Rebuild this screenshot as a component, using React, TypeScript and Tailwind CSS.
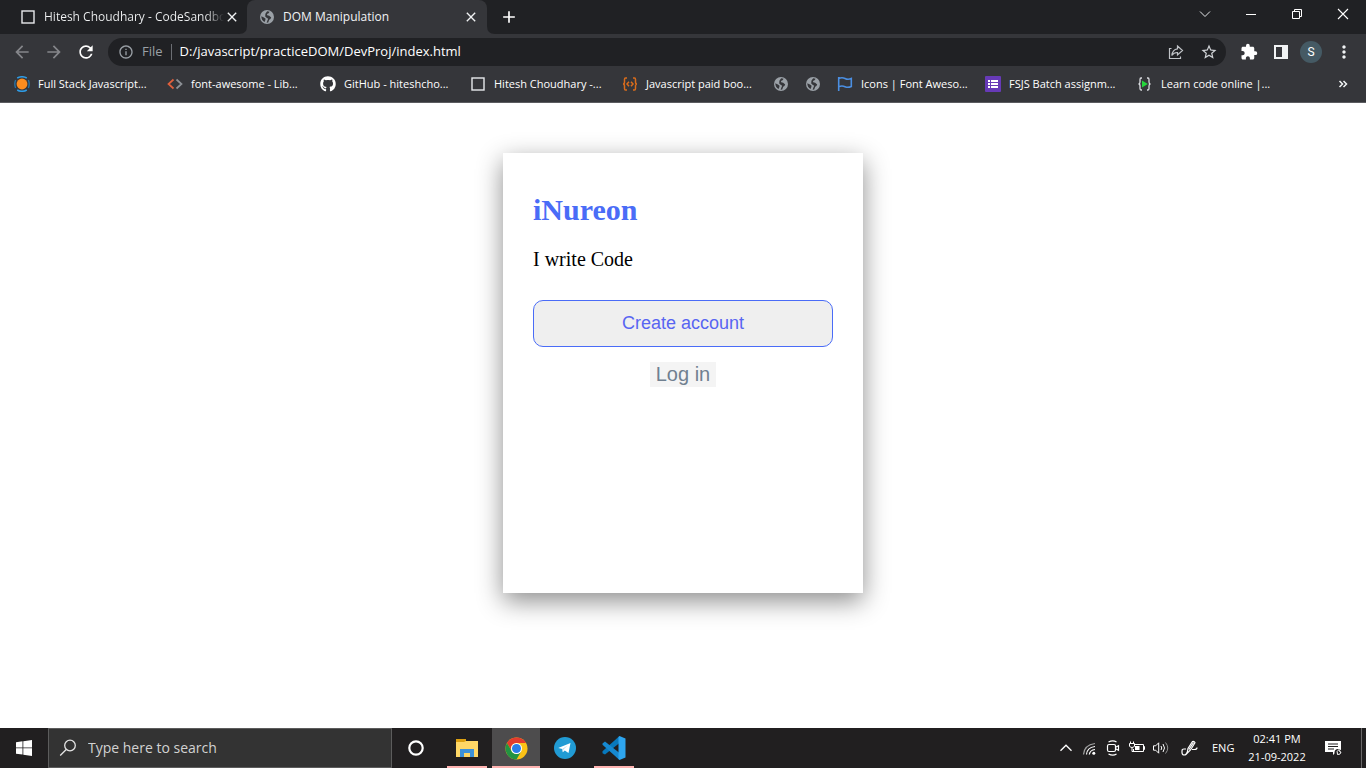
import React from "react";
import { MdArrowBack, MdArrowForward, MdRefresh, MdInfoOutline, MdStarOutline, MdExtension, MdAdd, MdClose, MdMoreVert } from "react-icons/md";
import { FaGithub } from "react-icons/fa";

const GlobeIcon = () => (
  <svg viewBox="0 0 16 16" className="size-4 shrink-0" aria-hidden="true">
    <circle cx="8" cy="8" r="7" fill="#9aa0a6" />
    <path d="M8.200 2.300 10.600 2.800 9.600 4.200 8 5 8.200 6.300 10.200 6.700 12.200 8.400 11.400 10 10.200 10.800 9.200 13.400 7.600 13.700 8.400 11.600 9.200 9.800 7.600 8.800 6.200 7.400 6.400 4.800ZM2.300 7.200 5 8.600 6.600 9.800 6.200 11.600 5.600 12.900Q2.300 11.200 2.300 7.200Z" fill="#35363a" />
  </svg>
);

const SquareIcon = () => (
  <svg viewBox="0 0 16 16" className="size-4 shrink-0" fill="none" aria-hidden="true">
    <rect x="2" y="2" width="12" height="12" stroke="#e8eaed" strokeWidth="1.4" />
  </svg>
);

const OrangeIcon = () => (
  <svg viewBox="0 0 16 16" className="size-4 shrink-0" fill="none" aria-hidden="true">
    <circle cx="8" cy="8" r="5.400" fill="#fb8c1e" />
    <path d="M3.200 2Q8-.6 12.800 2M3.200 14q4.800 2.600 9.600 0" stroke="#2f9be3" strokeWidth="1.500" />
    <path d="M1.600 4Q0 8 1.600 12M14.400 4q1.600 4 0 8" stroke="#2676ad" strokeWidth="1.300" />
  </svg>
);

const AngleIcon = () => (
  <svg viewBox="0 0 16 16" className="size-4 shrink-0" fill="none" strokeWidth="1.700" aria-hidden="true">
    <path d="M6.500 3.500 1.500 8l5 4.500" stroke="#e2603c" />
    <path d="m9.500 3.500 5 4.500-5 4.500" stroke="#8d9196" />
  </svg>
);

const BraceIcon = () => (
  <svg viewBox="0 0 16 16" className="size-4 shrink-0" fill="none" stroke="#d96c1c" strokeWidth="1.500" aria-hidden="true">
    <path d="M5 2H3.500Q2.500 2 2.500 3.500V6Q2.500 8 1 8q1.500 0 1.500 2v2.500q0 1.500 1 1.500H5M11 2h1.500q1 0 1 1.500V6q0 2 1.500 2-1.500 0-1.500 2v2.500q0 1.500-1 1.500H11" />
    <path d="M7 5.800 5 8l2 2.200M9 5.800 11 8l-2 2.200" />
  </svg>
);

const FlagIcon = () => (
  <svg viewBox="0 0 16 16" className="size-4 shrink-0" fill="none" stroke="#4b8fe2" strokeWidth="1.600" aria-hidden="true">
    <path d="M1.700 1v14M1.700 2.500Q5 1 8 2.500t6.300 0v8Q11 12 8 10.700t-6.300 0" />
  </svg>
);

const FormIcon = () => (
  <svg viewBox="0 0 16 16" className="size-4 shrink-0" aria-hidden="true">
    <rect width="16" height="16" rx="1" fill="#673ab7" />
    <path d="M3 4h2v2H3zM6 4h7v2H6zM3 7h2v2H3zM6 7h7v2H6zM3 10h2v2H3zM6 10h7v2H6z" fill="#fff" />
  </svg>
);

const PlayBraceIcon = () => (
  <svg viewBox="0 0 16 16" className="size-4 shrink-0" fill="none" stroke="#dadce0" strokeWidth="1.300" aria-hidden="true">
    <path d="M5 2H4Q3 2 3 3.500V6Q3 8 1.500 8 3 8 3 10v2.500Q3 14 4 14h1M10 2h1q1 0 1 1.500V6q0 2 1.500 2Q12 8 12 10v2.500q0 1.500-1 1.500h-1" />
    <path d="m5 4.500 5.800 3.500L5 11.500z" fill="#25d63b" stroke="none" />
  </svg>
);

const bookmarks = [
  { icon: <OrangeIcon />, label: "Full Stack Javascript...", width: "w-[113px]" },
  { icon: <AngleIcon />, label: "font-awesome - Lib...", width: "w-[113px]" },
  { icon: <FaGithub className="size-4 shrink-0 text-white" />, label: "GitHub - hiteshcho...", width: "w-[110px]" },
  { icon: <SquareIcon />, label: "Hitesh Choudhary -...", width: "w-[112px]" },
  { icon: <BraceIcon />, label: "Javascript paid boo...", width: "w-[111px]" },
  { icon: <GlobeIcon />, label: "", width: "" },
  { icon: <GlobeIcon />, label: "", width: "" },
  { icon: <FlagIcon />, label: "Icons | Font Aweso...", width: "w-[108px]" },
  { icon: <FormIcon />, label: "FSJS Batch assignm...", width: "w-[112px]" },
  { icon: <PlayBraceIcon />, label: "Learn code online |...", width: "w-[112px]" },
];

function TabStrip() {
  return (
    <header className="flex h-[34px] bg-[#202124] text-xs text-[#f1f3f4]">
      <div className="flex w-[247px] items-center pl-5">
        <SquareIcon />
        <span className="ml-2 w-[180px] whitespace-nowrap bg-gradient-to-r from-[#f1f3f4] from-90% to-transparent bg-clip-text text-transparent">
          Hitesh Choudhary - CodeSandbo
        </span>
        <button aria-label="Close Hitesh Choudhary tab"><MdClose className="size-4" /></button>
      </div>
      <div className="relative flex w-60 items-center rounded-t-lg bg-[#35363a] pl-3">
        <svg viewBox="0 0 8 8" className="absolute -left-2 bottom-0 size-2" aria-hidden="true"><path d="M8 0v8H0Q8 8 8 0" fill="#35363a" /></svg>
        <svg viewBox="0 0 8 8" className="absolute -right-2 bottom-0 size-2" aria-hidden="true"><path d="M0 0v8h8Q0 8 0 0" fill="#35363a" /></svg>
        <GlobeIcon />
        <span className="ml-2 flex-1 whitespace-nowrap">DOM Manipulation</span>
        <button aria-label="Close DOM Manipulation tab" className="mr-2"><MdClose className="size-4" /></button>
      </div>
      <button aria-label="New tab" className="ml-3 text-white"><MdAdd className="size-5" /></button>
      <div className="ml-auto flex h-7 items-center text-white">
        <button aria-label="Search tabs" className="flex w-[46px] justify-center">
          <svg viewBox="0 0 12 12" className="size-3" fill="none" stroke="#e4e6e9" aria-hidden="true"><path d="m1 3.500 5 5 5-5" /></svg>
        </button>
        <button aria-label="Minimize" className="flex w-[46px] justify-center">
          <svg viewBox="0 0 12 12" className="size-3" aria-hidden="true"><path d="M1 6h10v1H1z" fill="currentColor" /></svg>
        </button>
        <button aria-label="Restore" className="flex w-[46px] justify-center">
          <svg viewBox="0 0 12 12" className="size-3" fill="none" stroke="currentColor" aria-hidden="true"><path d="M1.500 3.500h7v7h-7zM3.500 3.500v-2h7v7h-2" /></svg>
        </button>
        <button aria-label="Close window" className="flex w-[46px] justify-center">
          <svg viewBox="0 0 12 12" className="size-3" fill="none" stroke="currentColor" strokeWidth="1.100" aria-hidden="true"><path d="m1 1 10 10M11 1 1 11" /></svg>
        </button>
      </div>
    </header>
  );
}

function Toolbar() {
  return (
    <div className="flex h-9 items-center bg-[#35363a] pr-4 pl-3">
      <div className="flex w-24 items-center gap-3">
        <button aria-label="Back" className="text-[#85868a]"><MdArrowBack className="size-5" /></button>
        <button aria-label="Forward" className="text-[#85868a]"><MdArrowForward className="size-5" /></button>
        <button aria-label="Reload" className="text-white"><MdRefresh className="size-5" /></button>
      </div>
      <div className="flex h-7 flex-1 items-center rounded-full bg-[#202124] pr-2 pl-2.5 text-[13px]">
        <MdInfoOutline className="size-4 text-[#9aa0a6]" />
        <span className="ml-2 text-[#9aa0a6]">File</span>
        <span className="mx-2 h-4 w-px bg-[#6b6e73]" />
        <input aria-label="Address" className="min-w-0 flex-1 bg-transparent text-white outline-none" defaultValue="D:/javascript/practiceDOM/DevProj/index.html" />
        <button aria-label="Share this page" className="mr-4">
          <svg viewBox="0 0 16 16" className="size-4" fill="none" stroke="#c0c3c7" strokeWidth="1.200" aria-hidden="true"><path d="M3.500 4.500h-2v10h11v-2M9.500 2l5 4.500-5 4.500V8.500Q6 8.300 3.800 11.500 4.500 5.500 9.500 4.800z" /></svg>
        </button>
        <button aria-label="Bookmark this tab"><MdStarOutline className="size-[18px] text-[#d0d3d7]" /></button>
      </div>
      <div className="ml-3.5 flex items-center gap-4">
        <button aria-label="Extensions"><MdExtension className="size-[18px] text-white" /></button>
        <button aria-label="Side panel">
          <svg viewBox="0 0 14 14" className="size-3.5" aria-hidden="true"><path d="M0 0h14v14H0zM2 2v10h6V2z" fill="#f1f3f4" fillRule="evenodd" /></svg>
        </button>
        <button aria-label="Profile" className="-mx-1 flex size-[22px] items-center justify-center rounded-full bg-[#455a64] font-['Roboto',sans-serif] text-xs text-white">S</button>
        <button aria-label="Menu" className="-mr-1"><MdMoreVert className="size-5 text-[#f1f3f4]" /></button>
      </div>
    </div>
  );
}

function BookmarksBar() {
  return (
    <nav aria-label="Bookmarks" className="flex h-[33px] items-center gap-4 border-b border-[#5b5c60] bg-[#35363a] pr-[18px] pb-1 pl-3.5 text-[11px] text-white">
      {bookmarks.map((b, i) => (
        <a key={i} href="#bookmark" aria-label={b.label || "Bookmark"} className="flex items-center gap-2">
          {b.icon}
          {b.label && <span className={`${b.width} whitespace-nowrap`}>{b.label}</span>}
        </a>
      ))}
      <button aria-label="More bookmarks" className="ml-auto">
        <svg viewBox="0 0 10 10" className="size-2.5" fill="none" stroke="#f1f3f4" strokeWidth="1.500" aria-hidden="true"><path d="m1.500 2 3 3-3 3M5.500 2l3 3-3 3" /></svg>
      </button>
    </nav>
  );
}

function AccountCard() {
  return (
    <main className="flex flex-1 items-start justify-center bg-white pt-[50px]">
      <section className="flex min-h-[440px] w-[360px] flex-col bg-white px-[30px] pt-10 shadow-[0_8px_24px_rgba(0,0,0,0.45)]">
        <h1 className="font-['Liberation_Serif',serif] text-[30px] leading-[34px] font-bold text-[#4a6cf7]">iNureon</h1>
        <p className="mt-5 font-['Liberation_Serif',serif] text-[20px] leading-6 text-black">I write Code</p>
        <button className="mt-[29px] h-[47px] rounded-[10px] border border-[#4a6cf7] bg-[#efefef] pb-0.5 font-['Liberation_Sans',sans-serif] text-lg text-[#5865f2]">Create account</button>
        <button className="mt-[15px] self-center bg-[#f4f4f4] px-1.5 font-['Liberation_Sans',sans-serif] text-[20px] leading-[25px] text-[#708090]">Log in</button>
      </section>
    </main>
  );
}

function ChromeLogo() {
  return (
    <svg viewBox="0 0 24 24" className="size-[23px]" aria-hidden="true">
      <circle cx="12" cy="12" r="11.500" fill="#fbc116" />
      <path d="M2.040 6.250A11.500 11.500 0 0 1 21.960 6.250H12A5.750 5.750 0 0 0 7.020 14.880z" fill="#e33b2e" />
      <path d="M2.040 6.250A11.500 11.500 0 0 0 12 23.500l4.980-8.620A5.750 5.750 0 0 1 7.020 14.880z" fill="#229342" />
      <circle cx="12" cy="12" r="5.750" fill="#fff" />
      <circle cx="12" cy="12" r="4.700" fill="#2a7de9" />
    </svg>
  );
}

function Taskbar() {
  return (
    <footer className="flex h-10 items-stretch bg-[#211f20] text-white">
      <button aria-label="Start" className="flex w-12 items-center justify-center">
        <svg viewBox="0 0 16 16" className="size-4" fill="#fff" aria-hidden="true"><path d="M0 2.200 6.500 1.300V7.500H0zM7.300 1.200 16 0v7.500H7.300zM0 8.300h6.500v6.300L0 13.700zM7.300 8.300H16V16l-8.700-1.200z" /></svg>
      </button>
      <label className="flex w-[344px] items-center gap-[11px] border border-[#5c5c5c] bg-[#333333] px-2.5">
        <svg viewBox="0 0 18 18" className="size-[18px] shrink-0" fill="none" stroke="#e4e4e4" strokeWidth="1.300" aria-hidden="true"><circle cx="11" cy="6.500" r="5.300" /><path d="m7.200 10.500-6 6" /></svg>
        <input aria-label="Search" placeholder="Type here to search" className="min-w-0 flex-1 bg-transparent text-sm outline-none placeholder:text-[#d2d2d2]" />
      </label>
      <button aria-label="Cortana" className="mr-[3px] flex w-12 items-center justify-center">
        <svg viewBox="0 0 16 16" className="size-4" fill="none" stroke="#fff" strokeWidth="2.200" aria-hidden="true"><circle cx="8" cy="8" r="6.700" /></svg>
      </button>
      <div className="flex gap-px">
        <button aria-label="File Explorer" className="relative flex w-12 items-center justify-center">
          <svg viewBox="0 0 22 20" className="h-5 w-[22px]" aria-hidden="true"><path d="M0 3h22v16H0z" fill="#ffd766" /><path d="M0 1h10v2L8 4H0z" fill="#dda011" /><path d="M4 11h14v8h-4v-4H8v4H4z" fill="#3d91d8" /></svg>
          <span className="absolute inset-x-1 bottom-0 h-0.5 bg-[#ffb3b1]" />
        </button>
        <button aria-label="Google Chrome" className="relative flex w-12 items-center justify-center bg-[#4d4c4d]">
          <ChromeLogo />
          <span className="absolute inset-x-0 bottom-0 h-0.5 bg-[#ffb3b1]" />
        </button>
        <button aria-label="Telegram" className="flex w-12 items-center justify-center">
          <svg viewBox="0 0 22 22" className="size-[22px]" aria-hidden="true"><circle cx="11" cy="11" r="11" fill="#219bd4" /><path d="M4.200 11 16.500 6l-2 10-3.700-2.600-2 1.800-.5-3.300z" fill="#fff" /><path d="m8.300 11.900 5.300-3.500-4.200 4.200-.6 2.600z" fill="#b8d9ec" /></svg>
        </button>
        <button aria-label="Visual Studio Code" className="relative flex w-12 items-center justify-center">
          <svg viewBox="0 0 24 24" className="size-6" aria-hidden="true"><path d="M17.500 0v7L3 18.500.5 17.300v-2z" fill="#0879bd" /><path d="M.5 7.500 3 5.500 17.500 17v7L.5 8.800z" fill="#1689d1" /><path d="m17.500 0 6 2.500v19l-6 2.500-1-1V1z" fill="#2ea5ef" /></svg>
          <span className="absolute inset-x-1 bottom-0 h-0.5 bg-[#ffb3b1]" />
        </button>
      </div>
      <div className="ml-auto flex items-center text-[11px]">
        <div className="flex items-center gap-2">
          <button aria-label="Show hidden icons"><svg viewBox="0 0 14 14" className="size-3.5" fill="none" stroke="#fff" strokeWidth="1.300" aria-hidden="true"><path d="m1.500 9.800 5.500-5.600 5.500 5.600" /></svg></button>
          <button aria-label="Network">
            <svg viewBox="0 0 16 16" className="size-4" fill="none" strokeWidth="1.200" aria-hidden="true"><path d="M2.500 14.500Q3 5 14 3.500" stroke="#a0a0a0" /><path d="M5.500 14.500Q6 7.500 14 6.500M8.300 14.500Q9 10 14 9.500" stroke="#fff" /><circle cx="12.800" cy="13.300" r="1.500" fill="#fff" /></svg>
          </button>
          <button aria-label="Meet now">
            <svg viewBox="0 0 16 16" className="size-4" fill="none" stroke="#fff" strokeWidth="1.200" aria-hidden="true"><rect x="2.500" y="4.500" width="8" height="7" rx="1.500" /><path d="m10.500 7.200 3-1.500v4.600l-3-1.500M3.500 2Q8-.2 11.500 2M3.500 14q4.500 2.200 8 0" /></svg>
          </button>
          <button aria-label="Battery">
            <svg viewBox="0 0 16 16" className="size-4" fill="none" stroke="#fff" aria-hidden="true"><path d="M6 4.500h8.500v7H4.500V9M14.500 6.500h1v3h-1M1.500 1.500v2M4.500 1.500v2M.5 3.500h5v2.500q-.5 1.500-2.500 1.500T.5 6zM3 7.500v4h2" /><path d="M6 6h4.500v4H6z" fill="#fff" stroke="none" /></svg>
          </button>
          <button aria-label="Volume">
            <svg viewBox="0 0 16 16" className="size-4" fill="none" stroke="#fff" aria-hidden="true"><path d="M.5 5.800h2.200l3-3v10.400l-3-3H.5zM8 6q1.500 2 0 4M10 4q3 4 0 8" /><path d="M12.500 2.500q4.500 5.500 0 11" stroke="#929292" /></svg>
          </button>
          <button aria-label="Pen" className="ml-1">
            <svg viewBox="0 0 17 16" className="h-4 w-[17px]" fill="none" stroke="#fff" strokeWidth="1.200" aria-hidden="true"><path d="M6 13.500 7 8.500l4.500-7q1.800-.5 2.500 1.200L9.500 10zM12.500 2.500 8 9.500M5 9H3Q1 9 1 11v1.500Q1 15 3.200 15T6 12.500M11 9.500h2.500Q16 9.500 16 7.500" /></svg>
          </button>
        </div>
        <span className="ml-3.5 w-[23px]">ENG</span>
        <time className="ml-[9px] w-[66px] text-center leading-[18px]">02:41 PM<br />21-09-2022</time>
        <button aria-label="Notifications" className="ml-3.5">
          <svg viewBox="0 0 18 18" className="size-[18px]" fill="none" aria-hidden="true"><path d="M1 2h16v11h-5l-3 3v-3H1z" fill="#fff" /><path d="M4 5h10M4 7.500h10M4 10h6" stroke="#211f20" /><circle cx="14" cy="13.500" r="3.500" fill="#211f20" /><path d="M15 10.500q-3 1.500-1.500 5 3 .5 3.500-2.500-2 .2-2-2.500z" stroke="#fff" /></svg>
        </button>
        <span className="mr-1 ml-[19px] h-10 w-px bg-[#696768]" />
      </div>
    </footer>
  );
}

export default function App() {
  return (
    <div className="flex min-h-screen flex-col font-['Open_Sans',sans-serif]">
      <TabStrip />
      <Toolbar />
      <BookmarksBar />
      <AccountCard />
      <Taskbar />
    </div>
  );
}
